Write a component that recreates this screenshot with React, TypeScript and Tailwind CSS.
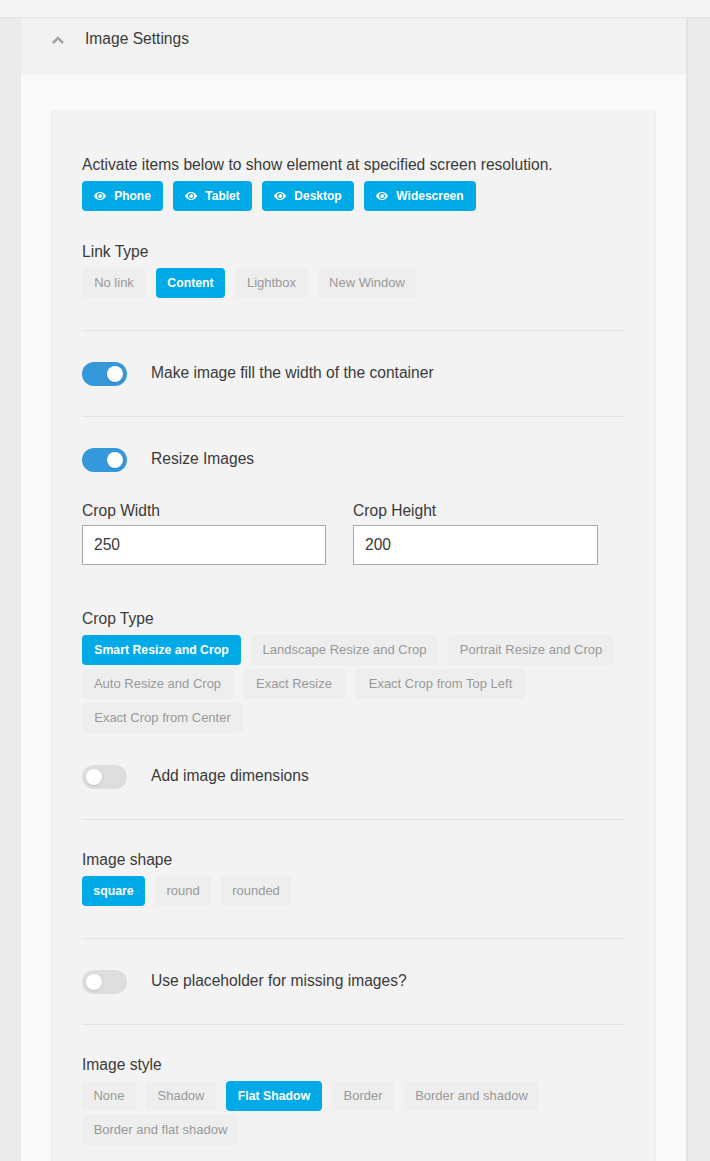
import { FaEye } from "react-icons/fa";

type PillItem = { label: string; width: string; active?: boolean };

const Pill = ({ label, width, active }: PillItem) => (
  <span
    className={
      active
        ? `${width} h-[30px] flex items-center justify-center rounded bg-[#00aae7] text-white text-[12.3px] font-bold`
        : `${width} h-[30px] flex items-center justify-center rounded bg-[#eeeeee] text-[#999999] text-[13px]`
    }
  >
    {label}
  </span>
);

const PillRow = ({ items }: { items: PillItem[] }) => (
  <div className="flex flex-wrap gap-x-[10px] gap-y-1">
    {items.map((item) => (
      <Pill key={item.label} {...item} />
    ))}
  </div>
);

const Toggle = ({ on, label }: { on?: boolean; label: string }) => (
  <div className="flex items-center gap-6 h-6">
    <span
      className={
        on
          ? "w-[45px] h-6 rounded-full bg-[#3498db] flex items-center justify-end pr-1"
          : "w-[45px] h-6 rounded-full bg-[#dddddd] flex items-center justify-start pl-1"
      }
    >
      <span className="size-4 rounded-full bg-white shadow-sm" />
    </span>
    <span className="-mt-0.5">{label}</span>
  </div>
);

const Field = ({ label, value, width }: { label: string; value: string; width: string }) => (
  <div className={width}>
    <div className="h-[23px] leading-[23px]">{label}</div>
    <div className="h-10 mt-[3px] bg-white border border-[#aaaaaa] px-[11px] flex items-center">{value}</div>
  </div>
);

const Divider = ({ className }: { className: string }) => <div className={`h-px bg-[#e3e3e3] ${className}`} />;

const screens = [
  { label: "Phone", width: "w-[81px]" },
  { label: "Tablet", width: "w-[79px]" },
  { label: "Desktop", width: "w-[92px]" },
  { label: "Widescreen", width: "w-[112px]" },
];

const linkTypes: PillItem[] = [
  { label: "No link", width: "w-[64px]" },
  { label: "Content", width: "w-[69px]", active: true },
  { label: "Lightbox", width: "w-[73px]" },
  { label: "New Window", width: "w-[98px]" },
];

const cropTypes: PillItem[] = [
  { label: "Smart Resize and Crop", width: "w-[159px]", active: true },
  { label: "Landscape Resize and Crop", width: "w-[187px]" },
  { label: "Portrait Resize and Crop", width: "w-[166px]" },
  { label: "Auto Resize and Crop", width: "w-[151px]" },
  { label: "Exact Resize", width: "w-[102px]" },
  { label: "Exact Crop from Top Left", width: "w-[171px]" },
  { label: "Exact Crop from Center", width: "w-[161px]" },
];

const shapes: PillItem[] = [
  { label: "square", width: "w-[63px]", active: true },
  { label: "round", width: "w-[56px]" },
  { label: "rounded", width: "w-[70px]" },
];

const styles: PillItem[] = [
  { label: "None", width: "w-[54px]" },
  { label: "Shadow", width: "w-[70px]" },
  { label: "Flat Shadow", width: "w-[96px]", active: true },
  { label: "Border", width: "w-[62px]" },
  { label: "Border and shadow", width: "w-[135px]" },
  { label: "Border and flat shadow", width: "w-[157px]" },
];

export default function App() {
  return (
    <div className="h-[1161px] overflow-hidden bg-[#ebebeb] text-[15.6px] text-[#3a3a3a] font-['Liberation_Sans',Arial,sans-serif]">
      <div className="h-[18px] bg-[#f5f5f5] border-b border-[#e3e3e3]" />
      <div className="ml-[21px] w-[667px] border-r-2 border-[#e2e2e2] bg-[#fafafa] pb-10">
        <div className="h-[57px] bg-[#f2f2f2] flex items-start pt-[9px]">
          <svg width="12" height="8" viewBox="0 0 12 8" className="ml-[31px] mt-[9px]" fill="none" stroke="#a3a3a3" strokeWidth="2.6">
            <path d="M1 7 L6 2 L11 7" />
          </svg>
          <span className="ml-[21px]">Image Settings</span>
        </div>
        <div className="mt-[35px] ml-[30px] w-[605px] bg-[#f3f3f3] border border-[#eeeeee] rounded-sm px-[30px] pt-[45px] pb-10">
          <div className="h-[18px] leading-[18px] mb-[7px]">Activate items below to show element at specified screen resolution.</div>
          <div className="flex gap-[10px]">
            {screens.map((item) => (
              <span key={item.label} className={`${item.width} h-[30px] flex items-center justify-center gap-2 rounded bg-[#00aae7] text-white text-[12px] font-bold`}>
                <FaEye className="size-3" />
                {item.label}
              </span>
            ))}
          </div>
          <div className="mt-[32px] h-[18px] leading-[18px] mb-[7px]">Link Type</div>
          <PillRow items={linkTypes} />
          <Divider className="mt-[32px] mb-[31px]" />
          <Toggle on label="Make image fill the width of the container" />
          <Divider className="mt-[30px] mb-[31px]" />
          <Toggle on label="Resize Images" />
          <div className="flex gap-[27px] mt-[27px]">
            <Field label="Crop Width" value="250" width="w-[244px]" />
            <Field label="Crop Height" value="200" width="w-[245px]" />
          </div>
          <div className="mt-[45px] h-[18px] leading-[18px] mb-[7px]">Crop Type</div>
          <PillRow items={cropTypes} />
          <div className="mt-8">
            <Toggle label="Add image dimensions" />
          </div>
          <Divider className="mt-[30px] mb-[31px]" />
          <div className="h-[18px] leading-[18px] mb-[7px]">Image shape</div>
          <PillRow items={shapes} />
          <Divider className="mt-[32px] mb-[31px]" />
          <Toggle label="Use placeholder for missing images?" />
          <Divider className="mt-[30px] mb-[31px]" />
          <div className="h-[18px] leading-[18px] mb-[7px]">Image style</div>
          <PillRow items={styles} />
        </div>
      </div>
    </div>
  );
}
